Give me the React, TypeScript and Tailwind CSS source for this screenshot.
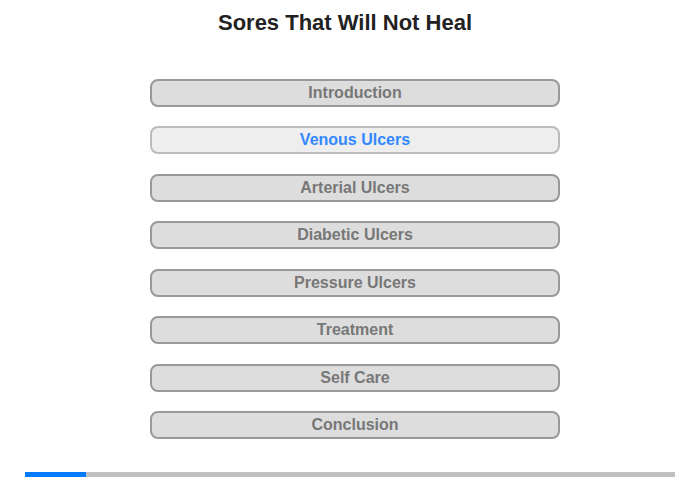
import React from "react";

const items = [
  "Introduction",
  "Venous Ulcers",
  "Arterial Ulcers",
  "Diabetic Ulcers",
  "Pressure Ulcers",
  "Treatment",
  "Self Care",
  "Conclusion",
];

export default function App() {
  return (
    <div
      className="w-[700px] h-[480px] bg-white flex flex-col relative"
      style={{ fontFamily: '"Liberation Sans", Arial, sans-serif' }}
    >
      <h1 className="mt-[10px] w-[690px] h-[26px] leading-[26px] text-center text-[22px] font-bold text-[#222222]">
        Sores That Will Not Heal
      </h1>
      <div className="mt-[43px] ml-[150px] flex flex-col gap-[19.43px]">
        {items.map((t, i) => {
          const active = i === 1;
          return (
            <div
              key={t}
              className={
                active
                  ? "w-[410px] h-[28px] rounded-[8px] border-2 border-[#bbbbbb] bg-[#eeeeee] flex items-center justify-center text-[16px] font-bold text-[#3388ff]"
                  : "w-[410px] h-[28px] rounded-[8px] border-2 border-[#999999] bg-[#dddddd] flex items-center justify-center text-[16px] font-bold text-[#777777]"
              }
            >
              {t}
            </div>
          );
        })}
      </div>
      <div className="absolute left-[25px] top-[472px] w-[650px] h-[5px] bg-[#c0c0c0] flex">
        <div className="w-[61px] h-full bg-[#007bff]" />
      </div>
    </div>
  );
}
